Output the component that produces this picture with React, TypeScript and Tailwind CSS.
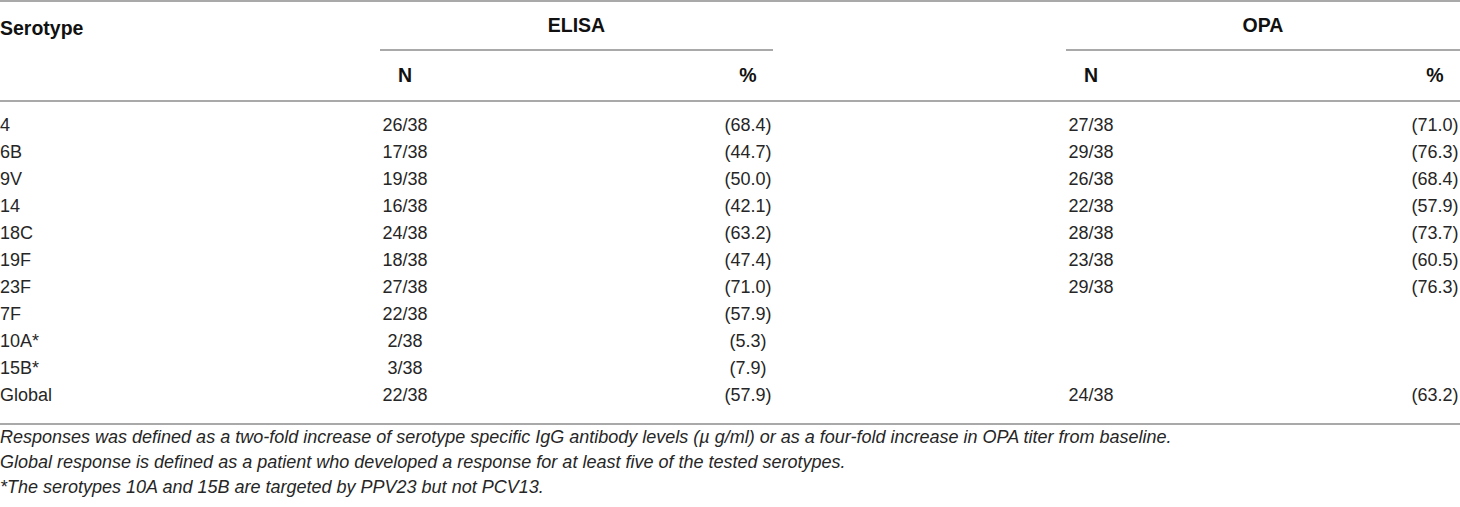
const rows: string[][] = [
  ["4", "26/38", "(68.4)", "27/38", "(71.0)"],
  ["6B", "17/38", "(44.7)", "29/38", "(76.3)"],
  ["9V", "19/38", "(50.0)", "26/38", "(68.4)"],
  ["14", "16/38", "(42.1)", "22/38", "(57.9)"],
  ["18C", "24/38", "(63.2)", "28/38", "(73.7)"],
  ["19F", "18/38", "(47.4)", "23/38", "(60.5)"],
  ["23F", "27/38", "(71.0)", "29/38", "(76.3)"],
  ["7F", "22/38", "(57.9)", "", ""],
  ["10A*", "2/38", "(5.3)", "", ""],
  ["15B*", "3/38", "(7.9)", "", ""],
  ["Global", "22/38", "(57.9)", "24/38", "(63.2)"],
];

const cols = "grid grid-cols-[380px_50px_293px_50px_293px_50px_294px_50px]";

function Row({ cells }: { cells: string[] }) {
  const [name, en, ep, on, op] = cells;
  return (
    <div className={`${cols} h-[27px] items-center`}>
      <div>{name}</div>
      <div className="whitespace-nowrap flex justify-center">{en}</div>
      <div />
      <div className="whitespace-nowrap flex justify-center">{ep}</div>
      <div />
      <div className="whitespace-nowrap flex justify-center">{on}</div>
      <div />
      <div className="whitespace-nowrap flex justify-center">{op}</div>
    </div>
  );
}

export default function App() {
  return (
    <main
      className="w-[1460px] h-[507px] bg-white text-[#262626] overflow-hidden"
      style={{ fontFamily: '"Liberation Sans", Arial, sans-serif' }}
    >
      <div className="border-t-2 border-[#a9a9a9]">
        <div className={`${cols} grid-rows-[49px_49px] font-bold text-[#111] text-[19.5px]`}>
          <div className="row-span-2 pt-[12px]">Serotype</div>
          <div className="col-start-2 col-span-3 row-start-1 border-b-2 border-[#a9a9a9] flex items-center justify-center">
            ELISA
          </div>
          <div className="col-start-6 col-span-3 row-start-1 border-b-2 border-[#a9a9a9] flex items-center justify-center">
            OPA
          </div>
          <div className="col-start-2 row-start-2 flex items-center justify-center">N</div>
          <div className="col-start-4 row-start-2 flex items-center justify-center">%</div>
          <div className="col-start-6 row-start-2 flex items-center justify-center">N</div>
          <div className="col-start-8 row-start-2 flex items-center justify-center">%</div>
        </div>
      </div>
      <div className="border-t-2 border-b-2 border-[#a9a9a9] pt-[10px] pb-[14px] text-[18px]">
        {rows.map((r) => (
          <Row key={r[0]} cells={r} />
        ))}
      </div>
      <div className="italic text-[18px] leading-[25px]">
        <p>
          Responses was defined as a two-fold increase of serotype specific IgG antibody levels (µ g/ml) or as a
          four-fold increase in OPA titer from baseline.
        </p>
        <p>Global response is defined as a patient who developed a response for at least five of the tested serotypes.</p>
        <p>*The serotypes 10A and 15B are targeted by PPV23 but not PCV13.</p>
      </div>
    </main>
  );
}
